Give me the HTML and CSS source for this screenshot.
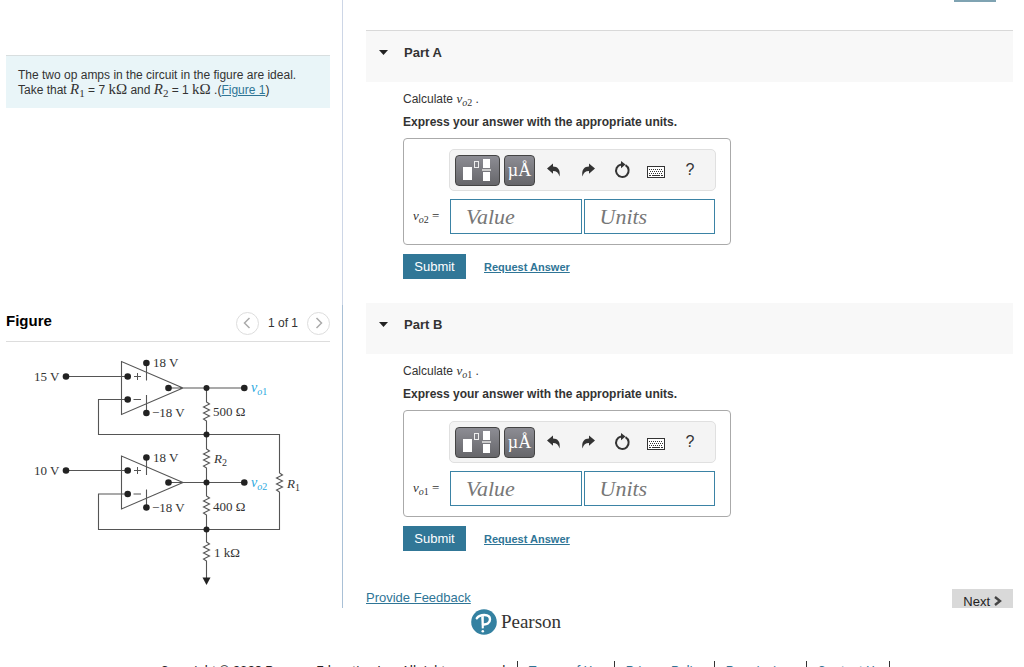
FILE: index.html
```html
<!DOCTYPE html>
<html lang="en">
<head>
<meta charset="utf-8">
<title>Op amp circuit</title>
<link rel="stylesheet" href="styles.css">
</head>
<body>
<svg class="defs" aria-hidden="true">
  <symbol id="undo" viewBox="0 0 14 14"><path d="M0 5.500L6 .5V3.400C10.500 3.400 13.800 6.500 12.500 13.500C11.500 9.800 9.500 8 6 8V10.800Z" fill="#333"/></symbol>
  <symbol id="reset" viewBox="0 0 18 18"><path d="M12.500 4.200A6.300 6.300 0 1 1 8 3.500" fill="none" stroke="#333" stroke-width="2"/><path d="M8 0L12.500 3.600L8 7.200Z" fill="#333"/></symbol>
  <symbol id="keys" viewBox="0 0 18 12"><rect x=".5" y=".5" width="17" height="11" fill="#fff" stroke="#333"/><path d="M2 3.500H16M3 5.500H16M2 7.500H16" stroke="#333" stroke-dasharray="1 1"/><path d="M2 9.500H4M5 9.500H13M14 9.500H16" stroke="#333"/></symbol>
  <symbol id="template" viewBox="0 0 30 24"><path d="M0 9H9V22H0ZM20 1H27V10H20ZM20 14H27V23H20Z" fill="#fff"/><rect x="11.500" y="3.500" width="4" height="6" fill="none" stroke="#eee"/><path d="M19 12H28" stroke="#ccc" stroke-width="2"/></symbol>
</svg>
<main class="workspace">
  <aside class="side">
    <section class="problem">
      <div class="intro">
        <p>The two op amps in the circuit in the figure are ideal.</p>
        <p>Take that <span class="math"><i>R</i><sub>1</sub></span> = 7 <span class="math">kΩ</span> and <span class="math"><i>R</i><sub>2</sub></span> = 1 <span class="math">kΩ</span> .(<a href="#figure">Figure 1</a>)</p>
      </div>
    </section>
    <section class="figure" id="figure">
      <header class="figure-head">
        <h2>Figure</h2>
        <nav class="pager" aria-label="Figure pages">
          <button type="button" aria-label="Previous figure"><svg width="8" height="12" viewBox="0 0 8 12"><path d="M6.500 1L1.500 6L6.500 11"/></svg></button>
          <span>1 of 1</span>
          <button type="button" aria-label="Next figure"><svg width="8" height="12" viewBox="0 0 8 12"><path d="M1.500 1L6.500 6L1.500 11"/></svg></button>
        </nav>
      </header>
      <svg class="circuit" viewBox="6 345 324 245" role="img" aria-label="Circuit with two op amps">
        <g class="wire">
          <path d="M66 376.500H127M121.500 361.500V414.500L183 388ZM168 388H244M146.500 363V380.500M146.500 395V413M128 399.500H98.500V434.500H279.500V473"/>
          <path d="M66 470.500H127M121.500 456V509L183 482.500ZM168 482.500H244M146.500 457.500V475M146.500 489.500V507.500M128 494H98.500V529.500H279.500V492"/>
          <path d="M206.500 388V402l3 2l-6 3l6 3l-6 3l6 3l-6 3l3 2V449l3 2l-6 3l6 3l-6 3l6 3l-6 3l3 2V496l3 2l-6 3l6 3l-6 3l6 3l-6 3l3 2V542l3 2l-6 3l6 3l-6 3l6 3l-6 3l3 2V578"/>
          <path d="M279.500 473l3 2l-6 3l6 3l-6 3l6 3l-6 3l3 2"/>
          <path class="sign" d="M134 376.500H141M137.500 373V380M133.500 399.500H141M134 470.500H141M137.500 467V474M133.500 494H141"/>
        </g>
        <path d="M202.500 577.500H210.500L206.500 585Z"/>
        <g>
          <circle cx="66" cy="376.500" r="3.300"/><circle cx="127.700" cy="376.500" r="3.300"/><circle cx="127.700" cy="399.500" r="3.300"/><circle cx="146.400" cy="363" r="3.300"/><circle cx="146.400" cy="413" r="3.300"/><circle cx="168.500" cy="388" r="3.300"/><circle cx="206.500" cy="388" r="3"/><circle cx="244.300" cy="388" r="3.300"/><circle cx="206.500" cy="434.500" r="3"/>
          <circle cx="66" cy="470.500" r="3.300"/><circle cx="127.700" cy="470.500" r="3.300"/><circle cx="127.700" cy="494" r="3.300"/><circle cx="146.400" cy="457.500" r="3.300"/><circle cx="146.400" cy="507.500" r="3.300"/><circle cx="168.500" cy="482.500" r="3.300"/><circle cx="206.500" cy="482.500" r="3"/><circle cx="244.300" cy="482.500" r="3.300"/><circle cx="206.500" cy="529.500" r="3"/>
        </g>
        <g class="labels">
          <text x="34" y="381">15 V</text><text x="153" y="367">18 V</text><text x="152" y="417">−18 V</text><text x="213" y="416">500 Ω</text>
          <text x="34" y="475">10 V</text><text x="153" y="462">18 V</text><text x="152" y="512">−18 V</text><text x="213" y="511">400 Ω</text>
          <text x="214" y="557">1 kΩ</text>
          <text x="214" y="463"><tspan class="var">R</tspan><tspan class="low" dy="3">2</tspan></text>
          <text x="287" y="488"><tspan class="var">R</tspan><tspan class="low" dy="3">1</tspan></text>
          <text class="out" x="251" y="392"><tspan class="var">v</tspan><tspan class="low" dy="3"><tspan class="var">o</tspan>1</tspan></text>
          <text class="out" x="251" y="487"><tspan class="var">v</tspan><tspan class="low" dy="3"><tspan class="var">o</tspan>2</tspan></text>
        </g>
      </svg>
    </section>
  </aside>
  <div class="parts">
    <div class="tab-edge"></div>
    <section class="part">
      <h2 class="part-head first"><svg width="9" height="5" viewBox="0 0 9 5"><path d="M0 0H9L4.500 5Z"/></svg>Part A</h2>
      <div class="part-body">
        <p>Calculate <span class="math small"><i>v</i><sub><i>o</i>2</sub></span> .</p>
        <p class="strong">Express your answer with the appropriate units.</p>
        <div class="answer">
          <div class="tools">
            <button type="button" class="dark wide" aria-label="Templates"><svg width="30" height="24"><use href="#template"/></svg></button>
            <button type="button" class="dark">µÅ</button>
            <button type="button" class="plain" aria-label="Undo"><svg width="14" height="14"><use href="#undo"/></svg></button>
            <button type="button" class="plain" aria-label="Redo"><svg class="flip" width="14" height="14"><use href="#undo"/></svg></button>
            <button type="button" class="plain" aria-label="Reset"><svg width="18" height="18"><use href="#reset"/></svg></button>
            <button type="button" class="plain" aria-label="Keyboard"><svg class="keys" width="18" height="12"><use href="#keys"/></svg></button>
            <button type="button" class="plain">?</button>
          </div>
          <label class="math small" for="va"><i>v</i><sub><i>o</i>2</sub> =</label>
          <div class="fields"><input id="va" type="text" placeholder="Value"><input type="text" placeholder="Units" aria-label="Units for part A"></div>
        </div>
        <div class="actions"><button type="button" class="submit">Submit</button><a href="#a">Request Answer</a></div>
      </div>
    </section>
    <section class="part">
      <h2 class="part-head"><svg width="9" height="5" viewBox="0 0 9 5"><path d="M0 0H9L4.500 5Z"/></svg>Part B</h2>
      <div class="part-body">
        <p>Calculate <span class="math small"><i>v</i><sub><i>o</i>1</sub></span> .</p>
        <p class="strong">Express your answer with the appropriate units.</p>
        <div class="answer">
          <div class="tools">
            <button type="button" class="dark wide" aria-label="Templates"><svg width="30" height="24"><use href="#template"/></svg></button>
            <button type="button" class="dark">µÅ</button>
            <button type="button" class="plain" aria-label="Undo"><svg width="14" height="14"><use href="#undo"/></svg></button>
            <button type="button" class="plain" aria-label="Redo"><svg class="flip" width="14" height="14"><use href="#undo"/></svg></button>
            <button type="button" class="plain" aria-label="Reset"><svg width="18" height="18"><use href="#reset"/></svg></button>
            <button type="button" class="plain" aria-label="Keyboard"><svg class="keys" width="18" height="12"><use href="#keys"/></svg></button>
            <button type="button" class="plain">?</button>
          </div>
          <label class="math small" for="vb"><i>v</i><sub><i>o</i>1</sub> =</label>
          <div class="fields"><input id="vb" type="text" placeholder="Value"><input type="text" placeholder="Units" aria-label="Units for part B"></div>
        </div>
        <div class="actions"><button type="button" class="submit">Submit</button><a href="#b">Request Answer</a></div>
      </div>
    </section>
    <div class="end-row">
      <a href="#feedback">Provide Feedback</a>
      <button type="button" class="next">Next <svg width="8" height="10" viewBox="0 0 8 10"><path d="M1 1L6 5L1 9"/></svg></button>
    </div>
  </div>
</main>
<footer class="footer">
  <div class="brand">
    <svg width="26" height="26" viewBox="0 0 26 26"><circle cx="13" cy="13" r="12.800" fill="#3481a1"/><path d="M5.800 9.200C9 5 18.800 4.500 19 10.200C19 14.500 15.500 15.800 12 15.500" fill="none" stroke="#fff" stroke-width="2.400" stroke-linecap="round"/><path d="M10.200 7.500L12.800 7V19.200L10.800 19.600Z" fill="#fff"/><circle cx="11.800" cy="22.200" r="1.300" fill="#fff"/></svg>
    <span>Pearson</span>
  </div>
  <div class="legal"><span>Copyright © 2023 Pearson Education Inc. All rights reserved.</span><a href="#terms">Terms of Use</a><a href="#privacy">Privacy Policy</a><a href="#permissions">Permissions</a><a href="#contact">Contact Us</a></div>
</footer>
</body>
</html>
```
FILE: styles.css
```css
* { box-sizing: border-box; }
body {
  margin: 0;
  height: 100vh;
  display: flex;
  flex-direction: column;
  overflow: hidden;
  background: #fff;
  color: #333;
  font: 12px/16px "Liberation Sans", Arial, sans-serif;
}
.defs { display: none; }
p, h2 { margin: 0; }
a { color: #2f7596; text-underline-offset: 1px; }
button { font: inherit; color: inherit; padding: 0; border: 0; cursor: pointer; }
.workspace {
  flex: 1;
  min-height: 0;
  display: grid;
  grid-template-columns: 343px 1fr;
  overflow: hidden;
}
.side { display: flex; flex-direction: column; }
.problem {
  flex: 1;
  padding: 55px 12px 0 6px;
  border-right: 1px solid #cdd6e6;
}
.intro {
  padding: 12px 12px 10px;
  border-top: 1px solid #d8dedf;
  background: #e9f5f8;
  line-height: 15px;
}
.math { font-family: "Liberation Serif", "Times New Roman", serif; font-size: 15px; line-height: 0; }
.math sub { font-size: 11px; line-height: 0; vertical-align: -3px; }
.math.small { font-size: 13px; }
.math.small sub { font-size: 10px; }
.figure { padding: 0 12px 25px 6px; border-right: 1px solid #a9c0d6; }
.figure-head {
  display: flex;
  justify-content: space-between;
  align-items: center;
  height: 37px;
  border-bottom: 1px solid #ddd;
}
.figure-head h2 { color: #000; font-size: 15px; padding-bottom: 4px; }
.pager { display: flex; align-items: center; gap: 9px; }
.pager button {
  display: grid;
  place-items: center;
  width: 23px;
  height: 23px;
  border: 1px solid #ddd;
  border-radius: 50%;
  background: #fff;
}
.pager path { fill: none; stroke: #aaa; stroke-width: 1.5; }
.circuit { display: block; width: 100%; margin-top: 3px; fill: #222; }
.wire { fill: none; stroke: #555; stroke-width: 1.1; }
.sign { stroke-width: 1; }
.labels { font: 13px "Liberation Serif", serif; fill: #333; }
.var { font-style: italic; }
.low { font-size: 10px; }
.out { fill: #29a9e0; font-size: 14px; }
.parts { padding: 0 11px 0 23px; }
.tab-edge { width: 42px; height: 2px; margin: 0 17px 28px auto; background: #7fa3b2; }
.part-head {
  display: flex;
  align-items: center;
  gap: 16px;
  height: 51px;
  padding: 0 13px 8px;
  background: #f8f8f8;
  font-size: 13px;
}
.part-head.first { height: 52px; border-top: 1px solid #d9d9d9; }
.part-head path { fill: #222; }
.part-body { padding: 9px 0 24px 37px; }
.part-body .strong { margin: 7px 0 8px; font-weight: bold; }
.answer {
  display: grid;
  grid-template-columns: 36px 267px;
  align-items: center;
  row-gap: 8px;
  width: 328px;
  padding: 10px 9px;
  border: 1px solid #aaa;
  border-radius: 4px;
}
.answer label { padding-top: 3px; white-space: nowrap; }
.tools {
  grid-column: 2;
  display: flex;
  align-items: center;
  height: 42px;
  padding: 0 5px;
  border: 1px solid #e0e0e0;
  border-radius: 5px;
  background: #f4f4f4;
}
.dark {
  display: grid;
  place-items: center;
  width: 31px;
  height: 31px;
  margin-right: 2px;
  border: 1px solid #444;
  border-radius: 4px;
  background: linear-gradient(#8d8d94, #66666a);
  color: #fff;
  font: 18px "Liberation Serif", serif;
}
.dark.wide { width: 45px; margin-right: 4px; }
.plain { display: grid; place-items: center; width: 34px; height: 31px; background: none; font-size: 16px; }
.flip { transform: scaleX(-1); }
.keys { margin-top: 3px; }
.fields { display: grid; grid-template-columns: 1fr 1fr; gap: 2px; padding: 0 1px; }
.fields input {
  width: 100%;
  height: 35px;
  padding: 0 15px;
  border: 1px solid #3b83a5;
  background: #fff;
  font: italic 22px "Liberation Serif", serif;
}
.fields input::placeholder { color: #777; opacity: 1; }
.actions { display: flex; align-items: center; gap: 18px; margin-top: 9px; }
.actions a { font-size: 11px; font-weight: bold; }
.submit { width: 63px; height: 25px; background: #317797; color: #fff; font-size: 13px; }
.end-row { display: flex; justify-content: space-between; align-items: flex-start; padding-top: 14px; }
.end-row a { padding-top: 1px; font-size: 13px; }
.next { width: 61px; height: 26px; background: #d9d9d9; font-size: 13px; color: #222; }
.next path { fill: none; stroke: #444; stroke-width: 2.4; }
.footer { flex: none; height: 59px; display: flex; flex-direction: column; align-items: center; overflow: hidden; }
.brand {
  display: flex;
  align-items: center;
  gap: 4px;
  padding: 1px 0 0 8px;
  font: 19px/26px "Liberation Serif", serif;
}
.legal { display: flex; margin-top: 26px; padding-left: 16px; font: 13px/20px Roboto, sans-serif; color: #222; white-space: nowrap; }
.legal > * { padding: 0 8px 0 11px; border-right: 1px solid #333; text-decoration: none; }
```
